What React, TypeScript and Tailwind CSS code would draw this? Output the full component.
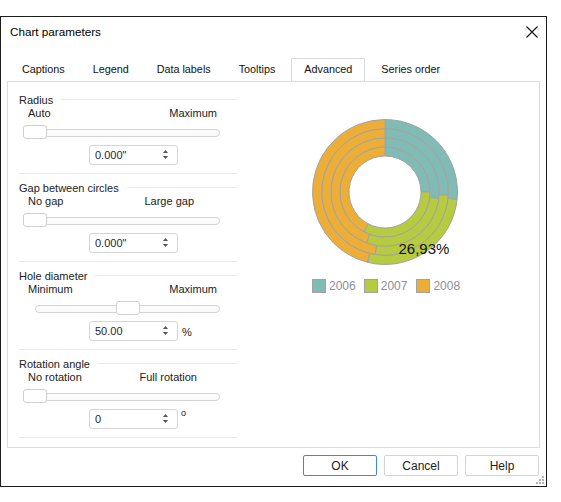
import React from "react";

const font = { fontFamily: '"Liberation Sans", Arial, sans-serif' };

function pt(cx: number, cy: number, r: number, a: number) {
  const rad = (a * Math.PI) / 180;
  return [cx + r * Math.sin(rad), cy - r * Math.cos(rad)];
}

function sector(cx: number, cy: number, r0: number, r1: number, a0: number, a1: number) {
  const large = a1 - a0 > 180 ? 1 : 0;
  const [x1, y1] = pt(cx, cy, r1, a0);
  const [x2, y2] = pt(cx, cy, r1, a1);
  const [x3, y3] = pt(cx, cy, r0, a1);
  const [x4, y4] = pt(cx, cy, r0, a0);
  return `M${x1} ${y1} A${r1} ${r1} 0 ${large} 1 ${x2} ${y2} L${x3} ${y3} A${r0} ${r0} 0 ${large} 0 ${x4} ${y4} Z`;
}

const TEAL = "#80bbb6";
const GREEN = "#b6cb3f";
const ORANGE = "#edae37";

function Donut() {
  const cx = 80;
  const cy = 80;
  const inner = 36;
  const outer = 72.5;
  const rings = [
    [90, 208],
    [97, 200],
    [93, 189],
    [96, 194],
  ];
  const w = (outer - inner) / rings.length;
  return (
    <svg width="160" height="160" viewBox="0 0 160 160">
      {rings.map(([b1, b2], i) => {
        const r0 = inner + i * w;
        const r1 = r0 + w;
        return (
          <g key={i} stroke="#a3a3a3" strokeWidth="1">
            <path d={sector(cx, cy, r0, r1, 0, b1)} fill={TEAL} />
            <path d={sector(cx, cy, r0, r1, b1, b2)} fill={GREEN} />
            <path d={sector(cx, cy, r0, r1, b2, 360)} fill={ORANGE} />
          </g>
        );
      })}
      <text x="93.5" y="142" fontSize="15" fill="#111" style={font}>
        26,93%
      </text>
    </svg>
  );
}

function Slider({ trackLeft, thumbLeft }: { trackLeft: number; thumbLeft: number }) {
  return (
    <div className="relative h-[14px] w-[218px]">
      <div
        className="absolute top-[4px] h-[8px] rounded-[4px] border border-[#d4d4d4] bg-[#fafafa]"
        style={{ left: trackLeft, width: 201 - trackLeft }}
      />
      <div
        className="absolute top-0 h-[14px] w-[24px] rounded-[3px] border border-[#cfcfcf] bg-white"
        style={{ left: thumbLeft }}
      />
    </div>
  );
}

function Spin({ value, suffix }: { value: string; suffix?: React.ReactNode }) {
  return (
    <div className="flex items-start">
      <div className="ml-[70px] flex h-[20px] w-[89px] items-center justify-between rounded-[3px] border border-[#d6d6d6] bg-white pl-[5px] pr-[8px]">
        <span className="text-[11px] text-[#1f2540]">{value}</span>
        <svg width="7" height="11" viewBox="0 0 7 11">
          <path d="M3.5 1 L6 4 L1 4 Z" fill="#555" />
          <path d="M3.5 10 L6 7 L1 7 Z" fill="#555" />
        </svg>
      </div>
      {suffix}
    </div>
  );
}

function Group({
  title,
  left,
  right,
  rightPad,
  trackLeft,
  thumbLeft,
  value,
  suffix,
}: {
  title: string;
  left: string;
  right: string;
  rightPad: number;
  trackLeft: number;
  thumbLeft: number;
  value: string;
  suffix?: React.ReactNode;
}) {
  return (
    <div className="flex w-[218px] flex-col">
      <div className="flex h-[14px] items-center">
        <span className="text-[11px] text-[#222]">{title}</span>
        <div className="ml-[8px] h-px flex-1 bg-[#e8e8e8]" />
      </div>
      <div className="flex h-[12px] items-center justify-between pl-[9px] text-[11px] text-[#222]" style={{ paddingRight: rightPad }}>
        <span>{left}</span>
        <span>{right}</span>
      </div>
      <div className="mt-[6px]">
        <Slider trackLeft={trackLeft} thumbLeft={thumbLeft} />
      </div>
      <div className="mt-[6px]">
        <Spin value={value} suffix={suffix} />
      </div>
      <div className="mt-[8px] h-px w-[218px] bg-[#e8e8e8]" />
    </div>
  );
}

function Tab({ label, active }: { label: string; active?: boolean }) {
  return (
    <div
      className={
        active
          ? "relative z-10 -mb-px flex h-[23px] items-center border border-b-0 border-[#d9d9d9] bg-white px-[12px] pb-[1px] text-[10.8px] text-[#111]"
          : "flex h-[23px] items-center px-[12px] pb-[1px] text-[10.8px] text-[#111]"
      }
    >
      {label}
    </div>
  );
}

export default function App() {
  return (
    <div className="h-[502px] w-[561px] bg-white" style={font}>
      <div className="h-[16px]" />
      <div className="flex h-[471px] w-[547px] flex-col border border-[#1c1c1c] bg-white">
        <div className="flex h-[30px] items-center justify-between pl-[9px] pr-[8px]">
          <span className="text-[11.7px] text-black">Chart parameters</span>
          <svg width="12" height="12" viewBox="0 0 12 12">
            <path d="M0.5 0.5 L11.5 11.5 M11.5 0.5 L0.5 11.5" stroke="#111" strokeWidth="1.1" />
          </svg>
        </div>
        <div className="ml-[9px] mt-[11px] flex gap-[4px]">
          <Tab label="Captions" />
          <Tab label="Legend" />
          <Tab label="Data labels" />
          <Tab label="Tooltips" />
          <Tab label="Advanced" active />
          <Tab label="Series order" />
        </div>
        <div className="ml-[6px] flex h-[368px] w-[533px] border border-[#dcdcdc]">
          <div className="ml-[11px] mt-[11px] flex flex-col gap-[7px]">
            <Group title="Radius" left="Auto" right="Maximum" rightPad={20} trackLeft={4} thumbLeft={4} value={'0.000"'} />
            <Group title="Gap between circles" left="No gap" right="Large gap" rightPad={43} trackLeft={4} thumbLeft={4} value={'0.000"'} />
            <Group
              title="Hole diameter"
              left="Minimum"
              right="Maximum"
              rightPad={20}
              trackLeft={16}
              thumbLeft={97}
              value="50.00"
              suffix={<span className="ml-[4px] mt-[3px] text-[11px] text-[#222]">%</span>}
            />
            <Group
              title="Rotation angle"
              left="No rotation"
              right="Full rotation"
              rightPad={40}
              trackLeft={4}
              thumbLeft={4}
              value="0"
              suffix={<span className="ml-[3px] mt-[-2px] text-[9px] text-[#222]">o</span>}
            />
          </div>
          <div className="ml-[68px] mt-[30px] flex flex-col">
            <Donut />
            <div className="ml-[7px] mt-[5px] flex items-center text-[12px] text-[#8e8e9a]">
              <div className="h-[14px] w-[14px] border border-[#a3a3a3]" style={{ background: TEAL }} />
              <span className="ml-[3px]">2006</span>
              <div className="ml-[8px] h-[14px] w-[14px] border border-[#a3a3a3]" style={{ background: GREEN }} />
              <span className="ml-[3px]">2007</span>
              <div className="ml-[9px] h-[14px] w-[14px] border border-[#a3a3a3]" style={{ background: ORANGE }} />
              <span className="ml-[3px]">2008</span>
            </div>
          </div>
        </div>
        <div className="mt-[7px] flex justify-end gap-[7px] pr-[7px]">
          <button className="h-[21px] w-[74px] rounded-[2px] border border-[#3b8ad6] bg-white text-[12px] text-[#222]">OK</button>
          <button className="h-[21px] w-[74px] rounded-[2px] border border-[#d4d4d4] bg-white text-[12px] text-[#222]">Cancel</button>
          <button className="h-[21px] w-[74px] rounded-[2px] border border-[#d4d4d4] bg-white text-[12px] text-[#222]">Help</button>
        </div>
        <div className="flex flex-1 items-end justify-end pb-[1px] pr-[1px]">
          <svg width="9" height="9" viewBox="0 0 9 9">
            <g fill="#b5b5b5">
              <rect x="6" y="0" width="2" height="2" />
              <rect x="3" y="3" width="2" height="2" />
              <rect x="6" y="3" width="2" height="2" />
              <rect x="0" y="6" width="2" height="2" />
              <rect x="3" y="6" width="2" height="2" />
              <rect x="6" y="6" width="2" height="2" />
            </g>
          </svg>
        </div>
      </div>
    </div>
  );
}
